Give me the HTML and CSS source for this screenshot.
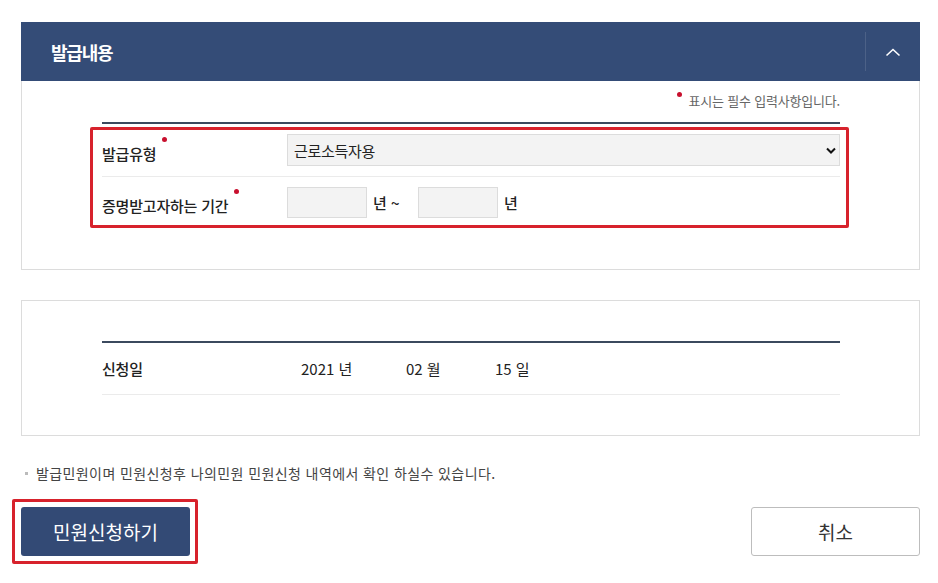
FILE: index.html
```html
<!DOCTYPE html>
<html lang="ko">
<head>
<meta charset="utf-8">
<title>발급내용</title>
<link rel="stylesheet" href="styles.css">
</head>
<body>
<div class="page">
  <section class="panel">
    <div class="panel-head">
      <h2 class="panel-title">발급내용</h2>
      <button class="toggle" type="button" aria-label="접기">
        <svg width="16" height="10" viewBox="0 0 16 10"><polyline points="1.5,8.5 8,2.5 14.5,8.5" fill="none" stroke="#fff" stroke-width="1.6"/></svg>
      </button>
    </div>
    <div class="panel-body">
      <p class="req-note"><span class="dot"></span>표시는 필수 입력사항입니다.</p>
      <div class="form-table">
        <div class="highlight highlight-form"></div>
        <div class="form-row">
          <div class="label">발급유형<span class="dot"></span></div>
          <div class="field">
            <div class="select">
              <span>근로소득자용</span>
              <svg width="10" height="7" viewBox="0 0 10 7"><polyline points="1,1.5 5,5.5 9,1.5" fill="none" stroke="#111" stroke-width="2"/></svg>
            </div>
          </div>
        </div>
        <div class="form-row">
          <div class="label">증명받고자하는 기간<span class="dot"></span></div>
          <div class="field">
            <input class="year" type="text">
            <span class="unit">년 ~</span>
            <input class="year" type="text">
            <span class="unit">년</span>
          </div>
        </div>
      </div>
    </div>
  </section>

  <section class="panel panel-date">
    <div class="date-table">
      <div class="date-row">
        <div class="label plain">신청일</div>
        <div class="date-vals">
          <span class="d-year">2021 년</span>
          <span class="d-month">02 월</span>
          <span class="d-day">15 일</span>
        </div>
      </div>
    </div>
  </section>

  <p class="info"><span class="bullet"></span>발급민원이며 민원신청후 나의민원 민원신청 내역에서 확인 하실수 있습니다.</p>

  <div class="actions">
    <div class="btn-wrap">
      <button class="btn btn-primary" type="button">민원신청하기</button>
      <div class="highlight highlight-btn"></div>
    </div>
    <button class="btn btn-cancel" type="button">취소</button>
  </div>
</div>
</body>
</html>
```

FILE: styles.css
```css
* { box-sizing: border-box; }
html, body { margin: 0; padding: 0; background: #fff; }
body {
  font-family: "Noto Sans CJK KR", "Noto Sans", sans-serif;
  color: #333;
}
.page {
  width: 899px;
  margin-left: 21px;
  padding-top: 22px;
  padding-bottom: 26px;
}
.panel {
  border: 1px solid #dcdcdc;
}
.panel-head {
  height: 59px;
  margin: -1px -1px 0 -1px;
  background: #344c77;
  display: flex;
  align-items: center;
  justify-content: space-between;
}
.panel-title {
  margin: 0 0 0 30px;
  color: #fff;
  font-size: 18px;
  font-weight: 700;
  letter-spacing: -1.2px;
}
.toggle {
  width: 55px;
  height: 39px;
  border: 0;
  border-left: 1px solid rgba(255,255,255,0.12);
  background: transparent;
  display: flex;
  align-items: center;
  justify-content: center;
  padding: 0;
}
.panel-body {
  padding: 8px 79px 41px 80px;
}
.req-note {
  margin: 0;
  text-align: right;
  font-size: 13px;
  color: #666;
  letter-spacing: -0.2px;
  height: 24px;
  line-height: 24px;
}
.req-note .dot { vertical-align: 9px; margin-right: 7px; }
.dot {
  display: inline-block;
  width: 5px;
  height: 5px;
  border-radius: 50%;
  background: #c8102e;
}
.form-table {
  position: relative;
  margin-top: 9px;
  border-top: 2px solid #3b4a5e;
}
.highlight {
  position: absolute;
  border: 3px solid #d7222c;
  border-radius: 2px;
  pointer-events: none;
}
.highlight-form {
  left: -12px;
  right: -9px;
  top: 3px;
  bottom: 0;
}
.form-row {
  display: flex;
  align-items: center;
  height: 52px;
}
.form-row + .form-row {
  border-top: 1px solid #ebebeb;
  height: 52px;
}
.label {
  width: 185px;
  flex: none;
  font-size: 15px;
  font-weight: 500;
  color: #222;
  letter-spacing: -0.2px;
}
.label .dot { vertical-align: 18px; margin-left: 6px; }
.field {
  flex: 1;
  display: flex;
  align-items: center;
}
.select {
  flex: 1;
  height: 32px;
  background: #f3f3f3;
  border: 1px solid #dcdcdc;
  display: flex;
  align-items: center;
  justify-content: space-between;
  padding: 0 3px 0 6px;
  font-size: 15px;
  letter-spacing: -0.3px;
  color: #222;
}
.year {
  width: 80px;
  height: 31px;
  background: #f3f3f3;
  border: 1px solid #dcdcdc;
  margin: 0;
  padding: 0;
}
.unit {
  font-size: 15px;
  font-weight: 500;
  color: #222;
  margin-left: 6px;
  width: 45px;
}
.panel-date {
  margin-top: 30px;
  padding: 40px 79px 40px 80px;
}
.date-table {
  border-top: 2px solid #3b4a5e;
}
.date-row {
  display: flex;
  align-items: center;
  height: 52px;
  border-bottom: 1px solid #ebebeb;
}
.date-vals {
  font-size: 15px;
  color: #222;
  display: flex;
  padding-left: 14px;
}
.d-year { width: 105px; }
.d-month { width: 89px; }
.info {
  margin: 27px 0 0 4px;
  font-size: 14px;
  color: #444;
  display: flex;
  align-items: center;
  letter-spacing: 0.4px;
}
.bullet {
  display: inline-block;
  width: 3px;
  height: 3px;
  background: #bbb;
  margin-right: 8px;
}
.actions {
  margin-top: 24px;
  display: flex;
  justify-content: space-between;
}
.btn-wrap { position: relative; }
.btn {
  width: 169px;
  height: 49px;
  border-radius: 3px;
  font-family: inherit;
  font-size: 19px;
  cursor: pointer;
}
.btn-primary {
  background: #334a75;
  color: #fff;
  border: 0;
}
.btn-cancel {
  background: #fff;
  color: #333;
  border: 1px solid #bdbdbd;
}
.highlight-btn {
  left: -9px;
  right: -8px;
  top: -8px;
  bottom: -8px;
}
```
